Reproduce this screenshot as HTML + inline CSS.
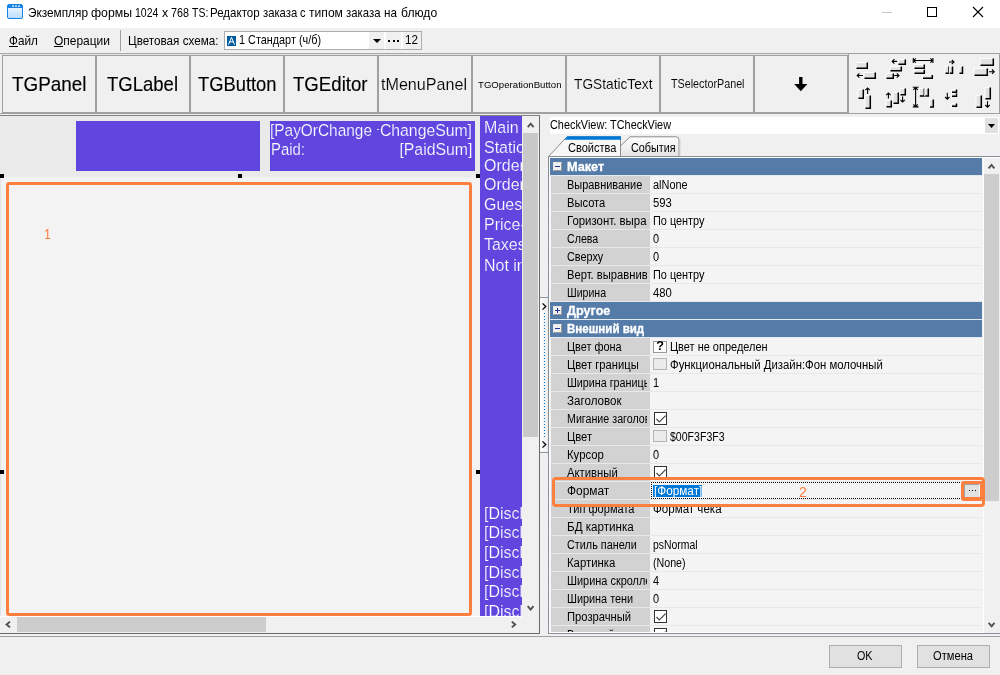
<!DOCTYPE html>
<html><head><meta charset="utf-8"><title>form</title>
<style>
html,body{margin:0;padding:0;}
body{width:1000px;height:675px;position:relative;overflow:hidden;background:#f0f0f0;font-family:"Liberation Sans",sans-serif;}
div{position:absolute;box-sizing:border-box;}
svg{position:absolute;overflow:visible;}
.t{white-space:pre;}
</style></head><body><div id="app" style="left:0;top:0;width:1000px;height:675px;overflow:hidden;will-change:transform;">
<div style="left:0px;top:0px;width:1000px;height:28px;background:#ffffff;"></div>
<svg style="left:7px;top:4px" width="16" height="15" viewBox="0 0 16 15">
<defs><linearGradient id="ig" x1="0" y1="0" x2="0" y2="1"><stop offset="0" stop-color="#f4faff"/><stop offset="1" stop-color="#b9dcfb"/></linearGradient></defs>
<rect x="0.5" y="0.5" width="15" height="14" rx="1.5" fill="url(#ig)" stroke="#1883e6" stroke-width="1"/>
<path d="M0.5 2 Q0.5 0.5 2 0.5 H14 Q15.5 0.5 15.5 2 V4 H0.5Z" fill="#1883e6"/>
<rect x="5" y="1.5" width="2" height="1.2" fill="#fff"/><rect x="8" y="1.5" width="2" height="1.2" fill="#fff"/><rect x="11" y="1.5" width="2" height="1.2" fill="#fff"/>
</svg>
<div id="t0" class="t" style="left:27.65px;top:0.60px;font-size:12.4px;line-height:25px;color:#000;transform:scaleX(0.9521);transform-origin:0 0;">Экземпляр</div>
<div id="t1" class="t" style="left:90.65px;top:0.60px;font-size:12.4px;line-height:25px;color:#000;transform:scaleX(0.9890);transform-origin:0 0;">формы</div>
<div id="t2" class="t" style="left:135.3px;top:0.60px;font-size:12.4px;line-height:25px;color:#000;transform:scaleX(0.8449);transform-origin:0 0;">1024</div>
<div id="t3" class="t" style="left:161.8px;top:0.60px;font-size:12.4px;line-height:25px;color:#000;transform:scaleX(0.9995);transform-origin:0 0;">x</div>
<div id="t4" class="t" style="left:170.6px;top:0.60px;font-size:12.4px;line-height:25px;color:#000;transform:scaleX(0.8701);transform-origin:0 0;">768</div>
<div id="t5" class="t" style="left:191.70000000000002px;top:0.60px;font-size:12.4px;line-height:25px;color:#000;transform:scaleX(0.8454);transform-origin:0 0;">TS:</div>
<div id="t6" class="t" style="left:210.15px;top:0.60px;font-size:12.4px;line-height:25px;color:#000;transform:scaleX(0.9317);transform-origin:0 0;">Редактор</div>
<div id="t7" class="t" style="left:262.65px;top:0.60px;font-size:12.4px;line-height:25px;color:#000;transform:scaleX(0.9097);transform-origin:0 0;">заказа</div>
<div id="t8" class="t" style="left:300.15px;top:0.60px;font-size:12.4px;line-height:25px;color:#000;transform:scaleX(0.8786);transform-origin:0 0;">с</div>
<div id="t9" class="t" style="left:308.65px;top:0.60px;font-size:12.4px;line-height:25px;color:#000;transform:scaleX(0.9779);transform-origin:0 0;">типом</div>
<div id="t10" class="t" style="left:345.65px;top:0.60px;font-size:12.4px;line-height:25px;color:#000;transform:scaleX(0.9164);transform-origin:0 0;">заказа</div>
<div id="t11" class="t" style="left:383.9px;top:0.60px;font-size:12.4px;line-height:25px;color:#000;transform:scaleX(0.9429);transform-origin:0 0;">на</div>
<div id="t12" class="t" style="left:400.65px;top:0.60px;font-size:12.4px;line-height:25px;color:#000;transform:scaleX(0.9804);transform-origin:0 0;">блюдо</div>
<div style="left:882px;top:12px;width:10px;height:1px;background:#c4c4c4;"></div>
<div style="left:927px;top:7px;width:10px;height:10px;border:1px solid #000;"></div>
<svg style="left:973px;top:7px" width="10" height="10" viewBox="0 0 10 10"><path d="M0 0 L10 10 M10 0 L0 10" stroke="#000" stroke-width="1.1" fill="none"/></svg>
<div id="t13" class="t" style="left:8.8px;top:28.97px;font-size:12.2px;line-height:24px;color:#000;transform:scaleX(0.9610);transform-origin:0 0;">Файл</div>
<div style="left:9px;top:46px;width:9px;height:1px;background:#000;"></div>
<div id="t14" class="t" style="left:53.6px;top:28.97px;font-size:12.2px;line-height:24px;color:#000;transform:scaleX(0.9822);transform-origin:0 0;">Операции</div>
<div style="left:54px;top:46px;width:9px;height:1px;background:#000;"></div>
<div style="left:120px;top:30px;width:1px;height:21px;background:#a0a0a0;"></div>
<div id="t15" class="t" style="left:128px;top:28.97px;font-size:12.2px;line-height:24px;color:#000;transform:scaleX(0.9583);transform-origin:0 0;">Цветовая схема:</div>
<div style="left:224px;top:31px;width:198px;height:19px;background:#fff;border:1px solid #adadad;"></div>
<svg style="left:227px;top:36px" width="9" height="10" viewBox="0 0 9 10"><rect width="9" height="10" fill="#005a9e"/>
<path d="M1.5 8.6 L4.5 1.4 L7.5 8.6 M2.4 5.9 H6.6" stroke="#fff" stroke-width="1" fill="none"/></svg>
<div id="t16" class="t" style="left:239.3px;top:28.07px;font-size:12.2px;line-height:24px;color:#000;transform:scaleX(0.8901);transform-origin:0 0;">1 Стандарт (ч/б)</div>
<div style="left:369px;top:32px;width:15px;height:17px;background:#f0f0f0;"></div>
<svg style="left:373px;top:39px" width="8" height="4" viewBox="0 0 8 4"><path d="M0 0 H8 L4 4Z" fill="#000"/></svg>
<div style="left:386px;top:32px;width:15px;height:17px;background:#f0f0f0;"></div>
<div style="left:388px;top:40px;width:2px;height:2px;background:#000;"></div>
<div style="left:392.5px;top:40px;width:2px;height:2px;background:#000;"></div>
<div style="left:397px;top:40px;width:2px;height:2px;background:#000;"></div>
<div style="left:403px;top:32px;width:18px;height:17px;background:#f0f0f0;"></div>
<div id="t17" class="t" style="left:405.2px;top:27.60px;font-size:12.4px;line-height:25px;color:#000;transform:scaleX(0.9422);transform-origin:0 0;">12</div>
<div style="left:0px;top:53px;width:1000px;height:1px;background:#a8a8a8;"></div>
<div style="left:0px;top:54px;width:1000px;height:1px;background:#e4e4e4;"></div>
<div style="left:2px;top:55px;width:94px;height:58px;background:#f0f0f0;border:1px solid #a0a0a0;"></div>
<div id="t18" class="t" style="left:12px;top:64.04px;font-size:19.8px;line-height:40px;color:#000;transform:scaleX(0.9542);transform-origin:0 0;-webkit-text-stroke:0.15px #000;">TGPanel</div>
<div style="left:96px;top:55px;width:94px;height:58px;background:#f0f0f0;border:1px solid #a0a0a0;"></div>
<div id="t19" class="t" style="left:107.4px;top:64.04px;font-size:19.8px;line-height:40px;color:#000;transform:scaleX(0.9357);transform-origin:0 0;-webkit-text-stroke:0.15px #000;">TGLabel</div>
<div style="left:190px;top:55px;width:94px;height:58px;background:#f0f0f0;border:1px solid #a0a0a0;"></div>
<div id="t20" class="t" style="left:197.5px;top:64.04px;font-size:19.8px;line-height:40px;color:#000;transform:scaleX(0.9271);transform-origin:0 0;-webkit-text-stroke:0.15px #000;">TGButton</div>
<div style="left:284px;top:55px;width:94px;height:58px;background:#f0f0f0;border:1px solid #a0a0a0;"></div>
<div id="t21" class="t" style="left:293.4px;top:64.04px;font-size:19.8px;line-height:40px;color:#000;transform:scaleX(0.9412);transform-origin:0 0;-webkit-text-stroke:0.15px #000;">TGEditor</div>
<div style="left:378px;top:55px;width:94px;height:58px;background:#f0f0f0;border:1px solid #a0a0a0;"></div>
<div id="t22" class="t" style="left:381.3px;top:68.12px;font-size:16.4px;line-height:33px;color:#000;transform:scaleX(0.9830);transform-origin:0 0;-webkit-text-stroke:0.12px #f0f0f0;">tMenuPanel</div>
<div style="left:472px;top:55px;width:94px;height:58px;background:#f0f0f0;border:1px solid #a0a0a0;"></div>
<div id="t23" class="t" style="left:477.6px;top:74.64px;font-size:9.4px;line-height:19px;color:#000;transform:scaleX(1.0271);transform-origin:0 0;-webkit-text-stroke:0px #f0f0f0;">TGOperationButton</div>
<div style="left:566px;top:55px;width:94px;height:58px;background:#f0f0f0;border:1px solid #a0a0a0;"></div>
<div id="t24" class="t" style="left:574.4px;top:69.88px;font-size:14.5px;line-height:29px;color:#000;transform:scaleX(0.9458);transform-origin:0 0;-webkit-text-stroke:0.1px #f0f0f0;">TGStaticText</div>
<div style="left:660px;top:55px;width:94px;height:58px;background:#f0f0f0;border:1px solid #a0a0a0;"></div>
<div id="t25" class="t" style="left:670.6px;top:70.93px;font-size:12.9px;line-height:26px;color:#000;transform:scaleX(0.8339);transform-origin:0 0;-webkit-text-stroke:0.05px #f0f0f0;">TSelectorPanel</div>
<div style="left:754px;top:55px;width:94px;height:58px;background:#f0f0f0;border:1px solid #a0a0a0;"></div>
<svg style="left:793.8px;top:77.4px" width="13.6" height="14.2" viewBox="0 0 13.6 14.2"><path d="M5.1 0 H8.5 V7 H13.4 L6.8 14.2 L0.2 7 H5.1Z" fill="#000"/></svg>
<div style="left:848px;top:53px;width:152px;height:61px;background:#f0f0f0;border:1px solid #a0a0a0;"></div>
<svg style="left:0;top:0" width="1000" height="675" viewBox="0 0 1000 675"><rect x="856" y="62" width="12" height="7" fill="#e2e2e2"/><path d="M856 68.5 V62.5 H867" stroke="#fff" stroke-width="1" fill="none"/><path d="M856.5 68.3 H867.3 V62.5" stroke="#000" stroke-width="1.5" fill="none"/><rect x="864" y="72" width="12" height="7" fill="#e2e2e2"/><path d="M864 78.5 V72.5 H875" stroke="#fff" stroke-width="1" fill="none"/><path d="M864.5 78.3 H875.3 V72.5" stroke="#000" stroke-width="1.5" fill="none"/><path d="M863 75.5 L857.2 75.5 M859.40 73.30 L857.2 75.5 L859.40 77.70" stroke="#000" stroke-width="1.1" fill="none"/><path d="M897.2 61.4 L892.2 61.4 M894.40 59.20 L892.2 61.4 L894.40 63.60" stroke="#000" stroke-width="1.1" fill="none"/><rect x="898" y="59" width="8" height="6" fill="#e2e2e2"/><path d="M898 64.5 V59.5 H905" stroke="#fff" stroke-width="1" fill="none"/><path d="M898.5 64.3 H905.3 V59.5" stroke="#000" stroke-width="1.5" fill="none"/><rect x="890" y="66" width="12" height="5.5" fill="#e2e2e2"/><path d="M890 71.0 V66.5 H901" stroke="#fff" stroke-width="1" fill="none"/><path d="M890.5 70.8 H901.3 V66.5" stroke="#000" stroke-width="1.5" fill="none"/><rect x="886" y="73" width="8" height="6" fill="#e2e2e2"/><path d="M886 78.5 V73.5 H893" stroke="#fff" stroke-width="1" fill="none"/><path d="M886.5 78.3 H893.3 V73.5" stroke="#000" stroke-width="1.5" fill="none"/><path d="M894.2 75.5 L899 75.5 M896.80 77.70 L899 75.5 L896.80 73.30" stroke="#000" stroke-width="1.1" fill="none"/><path d="M923 60.5 L913.6 60.5 M915.80 58.30 L913.6 60.5 L915.80 62.70" stroke="#000" stroke-width="1.1" fill="none"/><path d="M923 60.5 L932.6 60.5 M930.40 62.70 L932.6 60.5 L930.40 58.30" stroke="#000" stroke-width="1.1" fill="none"/><path d="M913.3 58 V63 M932.9 58 V63" stroke="#000" stroke-width="1.1"/><rect x="914" y="64" width="11" height="5" fill="#e2e2e2"/><path d="M914 68.5 V64.5 H924" stroke="#fff" stroke-width="1" fill="none"/><path d="M914.5 68.3 H924.3 V64.5" stroke="#000" stroke-width="1.5" fill="none"/><rect x="914" y="69.3" width="11" height="4.700000000000003" fill="#e2e2e2"/><path d="M914 73.5 V69.8 H924" stroke="#fff" stroke-width="1" fill="none"/><path d="M914.5 73.3 H924.3 V69.8" stroke="#000" stroke-width="1.5" fill="none"/><rect x="922.5" y="74.6" width="10.5" height="4.400000000000006" fill="#e2e2e2"/><path d="M922.5 78.5 V75.1 H932" stroke="#fff" stroke-width="1" fill="none"/><path d="M923.0 78.3 H932.3 V75.1" stroke="#000" stroke-width="1.5" fill="none"/><path d="M949 62 L954 62 M951.80 64.20 L954 62 L951.80 59.80" stroke="#000" stroke-width="1.1" fill="none"/><rect x="945" y="66" width="4.5" height="8" fill="#e2e2e2"/><path d="M945 73.5 V66.5 H948.5" stroke="#fff" stroke-width="1" fill="none"/><path d="M945.5 73.3 H948.8 V66.5" stroke="#000" stroke-width="1.5" fill="none"/><rect x="949.3" y="66" width="3.900000000000091" height="8" fill="#e2e2e2"/><path d="M949.3 73.5 V66.5 H952.2" stroke="#fff" stroke-width="1" fill="none"/><path d="M949.8 73.3 H952.5 V66.5" stroke="#000" stroke-width="1.5" fill="none"/><rect x="959" y="66" width="4.2000000000000455" height="8" fill="#e2e2e2"/><path d="M959 73.5 V66.5 H962.2" stroke="#fff" stroke-width="1" fill="none"/><path d="M959.5 73.3 H962.5 V66.5" stroke="#000" stroke-width="1.5" fill="none"/><rect x="980" y="58" width="14" height="8" fill="#e2e2e2"/><path d="M980 65.5 V58.5 H993" stroke="#fff" stroke-width="1" fill="none"/><path d="M980.5 65.3 H993.3 V58.5" stroke="#000" stroke-width="1.5" fill="none"/><rect x="974" y="68" width="14" height="8" fill="#e2e2e2"/><path d="M974 75.5 V68.5 H987" stroke="#fff" stroke-width="1" fill="none"/><path d="M974.5 75.3 H987.3 V68.5" stroke="#000" stroke-width="1.5" fill="none"/><path d="M989 71.7 L994.2 71.7 M992.00 73.90 L994.2 71.7 L992.00 69.50" stroke="#000" stroke-width="1.1" fill="none"/><rect x="858" y="89" width="6" height="10" fill="#e2e2e2"/><path d="M858 98.5 V89.5 H863" stroke="#fff" stroke-width="1" fill="none"/><path d="M858.5 98.3 H863.3 V89.5" stroke="#000" stroke-width="1.5" fill="none"/><path d="M867.6 94 L867.6 88 M869.80 90.20 L867.6 88 L865.40 90.20" stroke="#000" stroke-width="1.1" fill="none"/><rect x="865" y="95" width="6" height="14" fill="#e2e2e2"/><path d="M865 108.5 V95.5 H870" stroke="#fff" stroke-width="1" fill="none"/><path d="M865.5 108.3 H870.3 V95.5" stroke="#000" stroke-width="1.5" fill="none"/><path d="M888.4 98.6 L888.4 93 M890.60 95.20 L888.4 93 L886.20 95.20" stroke="#000" stroke-width="1.1" fill="none"/><rect x="886" y="100" width="6" height="7.5" fill="#e2e2e2"/><path d="M886 107.0 V100.5 H891" stroke="#fff" stroke-width="1" fill="none"/><path d="M886.5 106.8 H891.3 V100.5" stroke="#000" stroke-width="1.5" fill="none"/><rect x="893" y="92" width="6" height="12" fill="#e2e2e2"/><path d="M893 103.5 V92.5 H898" stroke="#fff" stroke-width="1" fill="none"/><path d="M893.5 103.3 H898.3 V92.5" stroke="#000" stroke-width="1.5" fill="none"/><rect x="900" y="88" width="6" height="7.5" fill="#e2e2e2"/><path d="M900 95.0 V88.5 H905" stroke="#fff" stroke-width="1" fill="none"/><path d="M900.5 94.8 H905.3 V88.5" stroke="#000" stroke-width="1.5" fill="none"/><path d="M902.6 96.4 L902.6 102 M900.40 99.80 L902.6 102 L904.80 99.80" stroke="#000" stroke-width="1.1" fill="none"/><path d="M915.6 97 L915.6 87.6 M917.80 89.80 L915.6 87.6 L913.40 89.80" stroke="#000" stroke-width="1.1" fill="none"/><path d="M915.6 97 L915.6 106.6 M913.40 104.40 L915.6 106.6 L917.80 104.40" stroke="#000" stroke-width="1.1" fill="none"/><path d="M912.8 87.3 H918.6 M912.8 106.9 H918.6" stroke="#000" stroke-width="1.1"/><rect x="919.3" y="88" width="5.7000000000000455" height="8.599999999999994" fill="#e2e2e2"/><path d="M919.3 96.1 V88.5 H924" stroke="#fff" stroke-width="1" fill="none"/><path d="M919.8 95.89999999999999 H924.3 V88.5" stroke="#000" stroke-width="1.5" fill="none"/><rect x="924.8" y="88" width="4.2000000000000455" height="8.599999999999994" fill="#e2e2e2"/><path d="M924.8 96.1 V88.5 H928" stroke="#fff" stroke-width="1" fill="none"/><path d="M925.3 95.89999999999999 H928.3 V88.5" stroke="#000" stroke-width="1.5" fill="none"/><rect x="929.5" y="99" width="4.5" height="8.599999999999994" fill="#e2e2e2"/><path d="M929.5 107.1 V99.5 H933" stroke="#fff" stroke-width="1" fill="none"/><path d="M930.0 106.89999999999999 H933.3 V99.5" stroke="#000" stroke-width="1.5" fill="none"/><path d="M947.3 92.8 L947.3 99.2 M945.10 97.00 L947.3 99.2 L949.50 97.00" stroke="#000" stroke-width="1.1" fill="none"/><rect x="951.5" y="89" width="5.7000000000000455" height="4" fill="#e2e2e2"/><path d="M951.5 92.5 V89.5 H956.2" stroke="#fff" stroke-width="1" fill="none"/><path d="M952.0 92.3 H956.5 V89.5" stroke="#000" stroke-width="1.5" fill="none"/><rect x="951.5" y="93" width="5.7000000000000455" height="4" fill="#e2e2e2"/><path d="M951.5 96.5 V93.5 H956.2" stroke="#fff" stroke-width="1" fill="none"/><path d="M952.0 96.3 H956.5 V93.5" stroke="#000" stroke-width="1.5" fill="none"/><rect x="951.5" y="103" width="5.7000000000000455" height="4" fill="#e2e2e2"/><path d="M951.5 106.5 V103.5 H956.2" stroke="#fff" stroke-width="1" fill="none"/><path d="M952.0 106.3 H956.5 V103.5" stroke="#000" stroke-width="1.5" fill="none"/><rect x="985" y="87" width="6" height="12.5" fill="#e2e2e2"/><path d="M985 99.0 V87.5 H990" stroke="#fff" stroke-width="1" fill="none"/><path d="M985.5 98.8 H990.3 V87.5" stroke="#000" stroke-width="1.5" fill="none"/><rect x="976" y="95" width="6" height="13" fill="#e2e2e2"/><path d="M976 107.5 V95.5 H981" stroke="#fff" stroke-width="1" fill="none"/><path d="M976.5 107.3 H981.3 V95.5" stroke="#000" stroke-width="1.5" fill="none"/><path d="M987.5 101.2 L987.5 107.2 M985.30 105.00 L987.5 107.2 L989.70 105.00" stroke="#000" stroke-width="1.1" fill="none"/></svg>
<div style="left:0px;top:113px;width:849px;height:1px;background:#a0a0a0;"></div>
<div style="left:0px;top:115px;width:540px;height:519px;background:#eaeaea;border-top:1px solid #828282;border-right:1px solid #696969;border-bottom:1px solid #696969;"></div>
<div style="left:1px;top:177px;width:479px;height:439px;background:#f3f3f3;"></div>
<div style="left:0px;top:177px;width:1px;height:439px;background:#e2e2e2;"></div>
<div style="left:76px;top:121px;width:184px;height:50px;background:#6046df;"></div>
<div style="left:270px;top:121px;width:205px;height:50px;background:#6046df;"></div>
<div id="t26" class="t" style="left:270.3px;top:114.28px;font-size:16.8px;line-height:34px;color:#fff;transform:scaleX(0.9188);transform-origin:0 0;-webkit-text-stroke:0.2px #6046df;">[PayOrChange</div>
<div id="t27" class="t" style="right:527.8px;top:114.28px;font-size:16.8px;line-height:34px;color:#fff;transform:scaleX(0.9392);transform-origin:100% 0;-webkit-text-stroke:0.2px #6046df;">ChangeSum]</div>
<div id="t28" class="t" style="left:270.8px;top:133.08px;font-size:16.8px;line-height:34px;color:#fff;transform:scaleX(0.8889);transform-origin:0 0;-webkit-text-stroke:0.2px #6046df;">Paid:</div>
<div id="t29" class="t" style="right:527.8px;top:133.08px;font-size:16.8px;line-height:34px;color:#fff;transform:scaleX(0.9429);transform-origin:100% 0;-webkit-text-stroke:0.2px #6046df;">[PaidSum]</div>
<div style="left:377.3px;top:128.6px;width:2.2px;height:1px;background:#e8e4ff;"></div>
<div style="left:480px;top:116px;width:42px;height:500px;background:#6046df;overflow:hidden;"><div id="t30" class="t" style="left:4.0px;top:-5.12px;font-size:16.8px;line-height:34px;color:#fff;transform:scaleX(0.9520);transform-origin:0 0;-webkit-text-stroke:0.2px #6046df;">Main</div><div id="t31" class="t" style="left:4.0px;top:14.68px;font-size:16.8px;line-height:34px;color:#fff;transform:scaleX(0.9520);transform-origin:0 0;-webkit-text-stroke:0.2px #6046df;">Static</div><div id="t32" class="t" style="left:4.0px;top:32.68px;font-size:16.8px;line-height:34px;color:#fff;transform:scaleX(0.9520);transform-origin:0 0;-webkit-text-stroke:0.2px #6046df;">Order</div><div id="t33" class="t" style="left:4.0px;top:52.48px;font-size:16.8px;line-height:34px;color:#fff;transform:scaleX(0.9520);transform-origin:0 0;-webkit-text-stroke:0.2px #6046df;">Order</div><div id="t34" class="t" style="left:4.0px;top:72.38px;font-size:16.8px;line-height:34px;color:#fff;transform:scaleX(0.9520);transform-origin:0 0;-webkit-text-stroke:0.2px #6046df;">Guest</div><div id="t35" class="t" style="left:4.0px;top:92.48px;font-size:16.8px;line-height:34px;color:#fff;transform:scaleX(0.9520);transform-origin:0 0;-webkit-text-stroke:0.2px #6046df;">Price-</div><div id="t36" class="t" style="left:4.0px;top:112.48px;font-size:16.8px;line-height:34px;color:#fff;transform:scaleX(0.9520);transform-origin:0 0;-webkit-text-stroke:0.2px #6046df;">Taxes</div><div id="t37" class="t" style="left:4.0px;top:132.58px;font-size:16.8px;line-height:34px;color:#fff;transform:scaleX(0.9520);transform-origin:0 0;-webkit-text-stroke:0.2px #6046df;">Not in</div><div id="t38" class="t" style="left:3.6000000000000227px;top:380.58px;font-size:16.8px;line-height:34px;color:#fff;transform:scaleX(0.9520);transform-origin:0 0;-webkit-text-stroke:0.2px #6046df;">[Discl</div><div id="t39" class="t" style="left:3.6000000000000227px;top:400.38px;font-size:16.8px;line-height:34px;color:#fff;transform:scaleX(0.9520);transform-origin:0 0;-webkit-text-stroke:0.2px #6046df;">[Discl</div><div id="t40" class="t" style="left:3.6000000000000227px;top:420.18px;font-size:16.8px;line-height:34px;color:#fff;transform:scaleX(0.9520);transform-origin:0 0;-webkit-text-stroke:0.2px #6046df;">[Discl</div><div id="t41" class="t" style="left:3.6000000000000227px;top:439.88px;font-size:16.8px;line-height:34px;color:#fff;transform:scaleX(0.9520);transform-origin:0 0;-webkit-text-stroke:0.2px #6046df;">[Discl</div><div id="t42" class="t" style="left:3.6000000000000227px;top:459.48px;font-size:16.8px;line-height:34px;color:#fff;transform:scaleX(0.9520);transform-origin:0 0;-webkit-text-stroke:0.2px #6046df;">[Discl</div><div id="t43" class="t" style="left:3.6000000000000227px;top:479.18px;font-size:16.8px;line-height:34px;color:#fff;transform:scaleX(0.9520);transform-origin:0 0;-webkit-text-stroke:0.2px #6046df;">[Discl</div></div>
<div style="left:6px;top:182px;width:466px;height:434px;background:#f3f3f3;border:3px solid #ff7f3f;border-radius:3px;"></div>
<svg style="left:0;top:0" width="60" height="250" viewBox="0 0 60 250"><path d="M45.2 231.4 L47.7 229.6 V238.4 M45.2 238.5 H50.3" stroke="#ff7f3f" stroke-width="1.15" fill="none"/></svg>
<div style="left:0px;top:174px;width:4px;height:4px;background:#000;"></div>
<div style="left:238px;top:174px;width:4px;height:4px;background:#000;"></div>
<div style="left:476px;top:174px;width:4px;height:4px;background:#000;"></div>
<div style="left:0px;top:470px;width:4px;height:4px;background:#000;"></div>
<div style="left:476px;top:470px;width:4px;height:4px;background:#000;"></div>
<div style="left:522px;top:116px;width:17px;height:500px;background:#f0f0f0;"></div>
<div style="left:523px;top:133px;width:15px;height:304px;background:#c8c8c8;"></div>
<div style="left:0px;top:616px;width:522px;height:17px;background:#f0f0f0;border-top:1px solid #fff;"></div>
<div style="left:522px;top:616px;width:17px;height:17px;background:#f0f0f0;"></div>
<div style="left:17px;top:617px;width:249px;height:15px;background:#cdcdcd;"></div>
<div style="left:540px;top:115px;width:460px;height:521px;background:#f0f0f0;"></div>
<div style="left:540px;top:297px;width:9px;height:156px;background:linear-gradient(90deg,#ffffff,#ececec);border:1px solid #8c949c;border-left:none;"></div>
<div style="left:544px;top:313px;width:1px;height:1px;background:#0078d7;"></div>
<div style="left:544px;top:316px;width:1px;height:1px;background:#0078d7;"></div>
<div style="left:544px;top:319px;width:1px;height:1px;background:#0078d7;"></div>
<div style="left:544px;top:322px;width:1px;height:1px;background:#0078d7;"></div>
<div style="left:544px;top:325px;width:1px;height:1px;background:#0078d7;"></div>
<div style="left:544px;top:328px;width:1px;height:1px;background:#0078d7;"></div>
<div style="left:544px;top:331px;width:1px;height:1px;background:#0078d7;"></div>
<div style="left:544px;top:334px;width:1px;height:1px;background:#0078d7;"></div>
<div style="left:544px;top:337px;width:1px;height:1px;background:#0078d7;"></div>
<div style="left:544px;top:340px;width:1px;height:1px;background:#0078d7;"></div>
<div style="left:544px;top:343px;width:1px;height:1px;background:#0078d7;"></div>
<div style="left:544px;top:346px;width:1px;height:1px;background:#0078d7;"></div>
<div style="left:544px;top:349px;width:1px;height:1px;background:#0078d7;"></div>
<div style="left:544px;top:352px;width:1px;height:1px;background:#0078d7;"></div>
<div style="left:544px;top:355px;width:1px;height:1px;background:#0078d7;"></div>
<div style="left:544px;top:358px;width:1px;height:1px;background:#0078d7;"></div>
<div style="left:544px;top:361px;width:1px;height:1px;background:#0078d7;"></div>
<div style="left:544px;top:364px;width:1px;height:1px;background:#0078d7;"></div>
<div style="left:544px;top:367px;width:1px;height:1px;background:#0078d7;"></div>
<div style="left:544px;top:370px;width:1px;height:1px;background:#0078d7;"></div>
<div style="left:544px;top:373px;width:1px;height:1px;background:#0078d7;"></div>
<div style="left:544px;top:376px;width:1px;height:1px;background:#0078d7;"></div>
<div style="left:544px;top:379px;width:1px;height:1px;background:#0078d7;"></div>
<div style="left:544px;top:382px;width:1px;height:1px;background:#0078d7;"></div>
<div style="left:544px;top:385px;width:1px;height:1px;background:#0078d7;"></div>
<div style="left:544px;top:388px;width:1px;height:1px;background:#0078d7;"></div>
<div style="left:544px;top:391px;width:1px;height:1px;background:#0078d7;"></div>
<div style="left:544px;top:394px;width:1px;height:1px;background:#0078d7;"></div>
<div style="left:544px;top:397px;width:1px;height:1px;background:#0078d7;"></div>
<div style="left:544px;top:400px;width:1px;height:1px;background:#0078d7;"></div>
<div style="left:544px;top:403px;width:1px;height:1px;background:#0078d7;"></div>
<div style="left:544px;top:406px;width:1px;height:1px;background:#0078d7;"></div>
<div style="left:544px;top:409px;width:1px;height:1px;background:#0078d7;"></div>
<div style="left:544px;top:412px;width:1px;height:1px;background:#0078d7;"></div>
<div style="left:544px;top:415px;width:1px;height:1px;background:#0078d7;"></div>
<div style="left:544px;top:418px;width:1px;height:1px;background:#0078d7;"></div>
<div style="left:544px;top:421px;width:1px;height:1px;background:#0078d7;"></div>
<div style="left:544px;top:424px;width:1px;height:1px;background:#0078d7;"></div>
<div style="left:544px;top:427px;width:1px;height:1px;background:#0078d7;"></div>
<div style="left:544px;top:430px;width:1px;height:1px;background:#0078d7;"></div>
<div style="left:544px;top:433px;width:1px;height:1px;background:#0078d7;"></div>
<div style="left:544px;top:436px;width:1px;height:1px;background:#0078d7;"></div>
<svg style="left:542px;top:303px" width="4.5" height="7" viewBox="0 0 4.5 7"><path d="M0.5 0.4 L3.8 3.5 L0.5 6.6" stroke="#000" stroke-width="1.25" fill="none"/></svg>
<svg style="left:542px;top:441px" width="4.5" height="7" viewBox="0 0 4.5 7"><path d="M0.5 0.4 L3.8 3.5 L0.5 6.6" stroke="#000" stroke-width="1.25" fill="none"/></svg>
<div style="left:550px;top:117px;width:449px;height:17px;background:#fff;"></div>
<div id="t44" class="t" style="left:550.4px;top:112.84px;font-size:12px;line-height:24px;color:#000;transform:scaleX(0.9070);transform-origin:0 0;">CheckView: TCheckView</div>
<div style="left:985px;top:118px;width:13px;height:15px;background:#e1e1e1;"></div>
<svg style="left:988px;top:124px" width="7" height="4" viewBox="0 0 7 4"><path d="M0 0 H7 L3.5 4Z" fill="#000"/></svg>
<svg style="left:548px;top:135px" width="140" height="23" viewBox="0 0 140 23">
<defs><linearGradient id="tg" x1="0" y1="0" x2="0" y2="1"><stop offset="0" stop-color="#fdfdfd"/><stop offset="0.5" stop-color="#f2f2f2"/><stop offset="1" stop-color="#e2e2e2"/></linearGradient></defs>
<path d="M72.5 21.5 V11 L82 1.8 H128 Q131 1.8 131 5 V21.5Z" fill="url(#tg)"/>
<path d="M72.5 11 L82 1.8 H128 Q131 1.8 131 5 V21.5" fill="none" stroke="#8c8c8c" stroke-width="1"/>
<path d="M132 4 V21.5" fill="none" stroke="#d4d4d4" stroke-width="1"/>
<path d="M0.5 21.5 L19 1.8 H72.5 V21.5Z" fill="#f7f7f7"/>
<path d="M0.5 21.5 L19 1.8 H72.5 V21.5" fill="none" stroke="#8c8c8c" stroke-width="1"/>
<path d="M19.5 1.3 H73 V4.7 H16.3Z" fill="#0078d7"/>
</svg>
<div id="t45" class="t" style="left:568px;top:135.84px;font-size:12px;line-height:24px;color:#000;transform:scaleX(0.9202);transform-origin:0 0;">Свойства</div>
<div id="t46" class="t" style="left:631px;top:135.84px;font-size:12px;line-height:24px;color:#000;transform:scaleX(0.8981);transform-origin:0 0;">События</div>
<div style="left:548px;top:156px;width:452px;height:478px;background:#f4f4f4;border-top:1px solid #868e98;border-left:1px solid #868e98;border-bottom:1px solid #868e98;"></div>
<div style="left:549px;top:157px;width:451px;height:476px;border-top:1px solid #fff;border-left:1px solid #fff;border-bottom:1px solid #fff;"></div>
<div style="left:550px;top:158px;width:432px;height:17px;background:#557ca9;"></div>
<div style="left:550px;top:175px;width:432px;height:1px;background:#e4eaf1;"></div>
<div style="left:553px;top:162px;width:9px;height:9px;background:#f0f0f0;border:1px solid #9a9a9a;border-top-color:#e8e8e8;border-left-color:#e8e8e8;"></div>
<div style="left:555px;top:166px;width:5px;height:1px;background:#26339a;"></div>
<div id="t47" class="t" style="left:567.0px;top:155.14px;font-size:12px;line-height:24px;color:#fff;font-weight:bold;transform:scaleX(1.0563);transform-origin:0 0;-webkit-text-stroke:0.3px #fff;">Макет</div>
<div style="left:551px;top:176px;width:99px;height:17px;background:#d2d2d2;"><div style="left:0;top:0;width:96px;height:17px;overflow:hidden;"><div id="t48" class="t" style="left:15.7px;top:-3.46px;font-size:12px;line-height:24px;color:#000;transform:scaleX(0.9115);transform-origin:0 0;">Выравнивание</div></div></div>
<div style="left:550px;top:193px;width:432px;height:1px;background:#e8e8e8;"></div>
<div id="t49" class="t" style="left:653.4px;top:172.54px;font-size:12px;line-height:24px;color:#000;transform:scaleX(0.9098);transform-origin:0 0;">alNone</div>
<div style="left:551px;top:194px;width:99px;height:17px;background:#d2d2d2;"><div style="left:0;top:0;width:96px;height:17px;overflow:hidden;"><div id="t50" class="t" style="left:15.7px;top:-3.46px;font-size:12px;line-height:24px;color:#000;transform:scaleX(0.9292);transform-origin:0 0;">Высота</div></div></div>
<div style="left:550px;top:211px;width:432px;height:1px;background:#e8e8e8;"></div>
<div id="t51" class="t" style="left:653.4px;top:190.54px;font-size:12px;line-height:24px;color:#000;transform:scaleX(0.9385);transform-origin:0 0;">593</div>
<div style="left:551px;top:212px;width:99px;height:17px;background:#d2d2d2;"><div style="left:0;top:0;width:96px;height:17px;overflow:hidden;"><div id="t52" class="t" style="left:15.7px;top:-3.46px;font-size:12px;line-height:24px;color:#000;transform:scaleX(0.9509);transform-origin:0 0;">Горизонт. выра</div></div></div>
<div style="left:550px;top:229px;width:432px;height:1px;background:#e8e8e8;"></div>
<div id="t53" class="t" style="left:653.4px;top:208.54px;font-size:12px;line-height:24px;color:#000;transform:scaleX(0.9080);transform-origin:0 0;">По центру</div>
<div style="left:551px;top:230px;width:99px;height:17px;background:#d2d2d2;"><div style="left:0;top:0;width:96px;height:17px;overflow:hidden;"><div id="t54" class="t" style="left:15.7px;top:-3.46px;font-size:12px;line-height:24px;color:#000;transform:scaleX(0.8875);transform-origin:0 0;">Слева</div></div></div>
<div style="left:550px;top:247px;width:432px;height:1px;background:#e8e8e8;"></div>
<div id="t55" class="t" style="left:653.4px;top:226.54px;font-size:12px;line-height:24px;color:#000;transform:scaleX(0.9100);transform-origin:0 0;">0</div>
<div style="left:551px;top:248px;width:99px;height:17px;background:#d2d2d2;"><div style="left:0;top:0;width:96px;height:17px;overflow:hidden;"><div id="t56" class="t" style="left:15.7px;top:-3.46px;font-size:12px;line-height:24px;color:#000;transform:scaleX(0.9047);transform-origin:0 0;">Сверху</div></div></div>
<div style="left:550px;top:265px;width:432px;height:1px;background:#e8e8e8;"></div>
<div id="t57" class="t" style="left:653.4px;top:244.54px;font-size:12px;line-height:24px;color:#000;transform:scaleX(0.9100);transform-origin:0 0;">0</div>
<div style="left:551px;top:266px;width:99px;height:17px;background:#d2d2d2;"><div style="left:0;top:0;width:96px;height:17px;overflow:hidden;"><div id="t58" class="t" style="left:15.7px;top:-3.46px;font-size:12px;line-height:24px;color:#000;transform:scaleX(0.9333);transform-origin:0 0;">Верт. выравнив</div></div></div>
<div style="left:550px;top:283px;width:432px;height:1px;background:#e8e8e8;"></div>
<div id="t59" class="t" style="left:653.4px;top:262.54px;font-size:12px;line-height:24px;color:#000;transform:scaleX(0.9080);transform-origin:0 0;">По центру</div>
<div style="left:551px;top:284px;width:99px;height:17px;background:#d2d2d2;"><div style="left:0;top:0;width:96px;height:17px;overflow:hidden;"><div id="t60" class="t" style="left:15.7px;top:-3.46px;font-size:12px;line-height:24px;color:#000;transform:scaleX(0.8808);transform-origin:0 0;">Ширина</div></div></div>
<div style="left:550px;top:301px;width:432px;height:1px;background:#e8e8e8;"></div>
<div id="t61" class="t" style="left:653.4px;top:280.54px;font-size:12px;line-height:24px;color:#000;transform:scaleX(0.9385);transform-origin:0 0;">480</div>
<div style="left:550px;top:302px;width:432px;height:17px;background:#557ca9;"></div>
<div style="left:550px;top:319px;width:432px;height:1px;background:#e4eaf1;"></div>
<div style="left:553px;top:306px;width:9px;height:9px;background:#f0f0f0;border:1px solid #9a9a9a;border-top-color:#e8e8e8;border-left-color:#e8e8e8;"></div>
<div style="left:555px;top:310px;width:5px;height:1px;background:#26339a;"></div>
<div style="left:557px;top:308px;width:1px;height:5px;background:#26339a;"></div>
<div id="t62" class="t" style="left:567.0px;top:299.14px;font-size:12px;line-height:24px;color:#fff;font-weight:bold;transform:scaleX(1.0521);transform-origin:0 0;-webkit-text-stroke:0.3px #fff;">Другое</div>
<div style="left:550px;top:320px;width:432px;height:17px;background:#557ca9;"></div>
<div style="left:550px;top:337px;width:432px;height:1px;background:#e4eaf1;"></div>
<div style="left:553px;top:324px;width:9px;height:9px;background:#f0f0f0;border:1px solid #9a9a9a;border-top-color:#e8e8e8;border-left-color:#e8e8e8;"></div>
<div style="left:555px;top:328px;width:5px;height:1px;background:#26339a;"></div>
<div id="t63" class="t" style="left:567.0px;top:317.14px;font-size:12px;line-height:24px;color:#fff;font-weight:bold;transform:scaleX(0.9614);transform-origin:0 0;-webkit-text-stroke:0.3px #fff;">Внешний вид</div>
<div style="left:551px;top:338px;width:99px;height:17px;background:#d2d2d2;"><div style="left:0;top:0;width:96px;height:17px;overflow:hidden;"><div id="t64" class="t" style="left:15.7px;top:-3.46px;font-size:12px;line-height:24px;color:#000;transform:scaleX(0.9088);transform-origin:0 0;">Цвет фона</div></div></div>
<div style="left:550px;top:355px;width:432px;height:1px;background:#e8e8e8;"></div>
<div style="left:653px;top:340.6px;width:13.8px;height:12.2px;background:#fff;border:1px solid #9a9a9a;"></div>
<div id="t65" class="t" style="left:656.2px;top:334.33px;font-size:12.6px;line-height:25px;color:#000;font-weight:bold;">?</div>
<div id="t66" class="t" style="left:669.7px;top:334.54px;font-size:12px;line-height:24px;color:#000;transform:scaleX(0.9147);transform-origin:0 0;">Цвет не определен</div>
<div style="left:551px;top:356px;width:99px;height:17px;background:#d2d2d2;"><div style="left:0;top:0;width:96px;height:17px;overflow:hidden;"><div id="t67" class="t" style="left:15.7px;top:-3.46px;font-size:12px;line-height:24px;color:#000;transform:scaleX(0.9338);transform-origin:0 0;">Цвет границы</div></div></div>
<div style="left:550px;top:373px;width:432px;height:1px;background:#e8e8e8;"></div>
<div style="left:653px;top:358.1px;width:13.8px;height:12.4px;background:#ebebeb;border:1px solid #b4b4b4;"></div>
<div id="t68" class="t" style="left:670.2px;top:352.54px;font-size:12px;line-height:24px;color:#000;transform:scaleX(0.9460);transform-origin:0 0;">Функциональный Дизайн:Фон молочный</div>
<div style="left:551px;top:374px;width:99px;height:17px;background:#d2d2d2;"><div style="left:0;top:0;width:96px;height:17px;overflow:hidden;"><div id="t69" class="t" style="left:15.7px;top:-3.46px;font-size:12px;line-height:24px;color:#000;transform:scaleX(0.8950);transform-origin:0 0;">Ширина границы</div></div></div>
<div style="left:550px;top:391px;width:432px;height:1px;background:#e8e8e8;"></div>
<div id="t70" class="t" style="left:653.4px;top:370.54px;font-size:12px;line-height:24px;color:#000;transform:scaleX(0.9100);transform-origin:0 0;">1</div>
<div style="left:551px;top:392px;width:99px;height:17px;background:#d2d2d2;"><div style="left:0;top:0;width:96px;height:17px;overflow:hidden;"><div id="t71" class="t" style="left:15.7px;top:-3.46px;font-size:12px;line-height:24px;color:#000;transform:scaleX(0.9677);transform-origin:0 0;">Заголовок</div></div></div>
<div style="left:550px;top:409px;width:432px;height:1px;background:#e8e8e8;"></div>
<div style="left:551px;top:410px;width:99px;height:17px;background:#d2d2d2;"><div style="left:0;top:0;width:96px;height:17px;overflow:hidden;"><div id="t72" class="t" style="left:15.7px;top:-3.46px;font-size:12px;line-height:24px;color:#000;transform:scaleX(0.8900);transform-origin:0 0;">Мигание заголов</div></div></div>
<div style="left:550px;top:427px;width:432px;height:1px;background:#e8e8e8;"></div>
<div style="left:654.2px;top:412.3px;width:13px;height:12.4px;background:#fff;border:1px solid #333;"></div>
<svg style="left:655.8000000000001px;top:414.5px" width="10" height="8" viewBox="0 0 10 8"><path d="M0.5 4 L3.3 6.9 L9.6 0.6" stroke="#444" stroke-width="1.15" fill="none"/></svg>
<div style="left:551px;top:428px;width:99px;height:17px;background:#d2d2d2;"><div style="left:0;top:0;width:96px;height:17px;overflow:hidden;"><div id="t73" class="t" style="left:15.7px;top:-3.46px;font-size:12px;line-height:24px;color:#000;transform:scaleX(0.9334);transform-origin:0 0;">Цвет</div></div></div>
<div style="left:550px;top:445px;width:432px;height:1px;background:#e8e8e8;"></div>
<div style="left:653px;top:430.1px;width:13.8px;height:12.4px;background:#ebebeb;border:1px solid #b4b4b4;"></div>
<div id="t74" class="t" style="left:670.2px;top:424.54px;font-size:12px;line-height:24px;color:#000;transform:scaleX(0.8800);transform-origin:0 0;">$00F3F3F3</div>
<div style="left:551px;top:446px;width:99px;height:17px;background:#d2d2d2;"><div style="left:0;top:0;width:96px;height:17px;overflow:hidden;"><div id="t75" class="t" style="left:15.7px;top:-3.46px;font-size:12px;line-height:24px;color:#000;transform:scaleX(0.9432);transform-origin:0 0;">Курсор</div></div></div>
<div style="left:550px;top:463px;width:432px;height:1px;background:#e8e8e8;"></div>
<div id="t76" class="t" style="left:653.4px;top:442.54px;font-size:12px;line-height:24px;color:#000;transform:scaleX(0.9100);transform-origin:0 0;">0</div>
<div style="left:551px;top:464px;width:99px;height:17px;background:#d2d2d2;"><div style="left:0;top:0;width:96px;height:17px;overflow:hidden;"><div id="t77" class="t" style="left:15.7px;top:-3.46px;font-size:12px;line-height:24px;color:#000;transform:scaleX(0.9421);transform-origin:0 0;">Активный</div></div></div>
<div style="left:550px;top:481px;width:432px;height:1px;background:#e8e8e8;"></div>
<div style="left:654.2px;top:466.3px;width:13px;height:12.4px;background:#fff;border:1px solid #333;"></div>
<svg style="left:655.8000000000001px;top:468.5px" width="10" height="8" viewBox="0 0 10 8"><path d="M0.5 4 L3.3 6.9 L9.6 0.6" stroke="#444" stroke-width="1.15" fill="none"/></svg>
<div style="left:551px;top:482px;width:99px;height:17px;background:#d2d2d2;"><div style="left:0;top:0;width:96px;height:17px;overflow:hidden;"><div id="t78" class="t" style="left:15.7px;top:-3.46px;font-size:12px;line-height:24px;color:#000;transform:scaleX(0.9920);transform-origin:0 0;">Формат</div></div></div>
<div style="left:550px;top:499px;width:432px;height:1px;background:#e8e8e8;"></div>
<div style="left:653px;top:484.5px;width:49px;height:12.5px;background:#0078d7;"></div>
<div id="t79" class="t" style="left:653.6px;top:478.54px;font-size:12px;line-height:24px;color:#fff;transform:scaleX(0.9798);transform-origin:0 0;">[Формат]</div>
<div style="left:551px;top:500px;width:99px;height:17px;background:#d2d2d2;"><div style="left:0;top:0;width:96px;height:17px;overflow:hidden;"><div id="t80" class="t" style="left:15.7px;top:-3.46px;font-size:12px;line-height:24px;color:#000;transform:scaleX(0.9213);transform-origin:0 0;">Тип формата</div></div></div>
<div style="left:550px;top:517px;width:432px;height:1px;background:#e8e8e8;"></div>
<div id="t81" class="t" style="left:653.4px;top:496.54px;font-size:12px;line-height:24px;color:#000;transform:scaleX(0.9651);transform-origin:0 0;">Формат чека</div>
<div style="left:551px;top:518px;width:99px;height:17px;background:#d2d2d2;"><div style="left:0;top:0;width:96px;height:17px;overflow:hidden;"><div id="t82" class="t" style="left:15.7px;top:-3.46px;font-size:12px;line-height:24px;color:#000;transform:scaleX(0.9688);transform-origin:0 0;">БД картинка</div></div></div>
<div style="left:550px;top:535px;width:432px;height:1px;background:#e8e8e8;"></div>
<div style="left:551px;top:536px;width:99px;height:17px;background:#d2d2d2;"><div style="left:0;top:0;width:96px;height:17px;overflow:hidden;"><div id="t83" class="t" style="left:15.7px;top:-3.46px;font-size:12px;line-height:24px;color:#000;transform:scaleX(0.9024);transform-origin:0 0;">Стиль панели</div></div></div>
<div style="left:550px;top:553px;width:432px;height:1px;background:#e8e8e8;"></div>
<div id="t84" class="t" style="left:653.4px;top:532.54px;font-size:12px;line-height:24px;color:#000;transform:scaleX(0.8684);transform-origin:0 0;">psNormal</div>
<div style="left:551px;top:554px;width:99px;height:17px;background:#d2d2d2;"><div style="left:0;top:0;width:96px;height:17px;overflow:hidden;"><div id="t85" class="t" style="left:15.7px;top:-3.46px;font-size:12px;line-height:24px;color:#000;transform:scaleX(0.9473);transform-origin:0 0;">Картинка</div></div></div>
<div style="left:550px;top:571px;width:432px;height:1px;background:#e8e8e8;"></div>
<div id="t86" class="t" style="left:653.4px;top:550.54px;font-size:12px;line-height:24px;color:#000;transform:scaleX(0.8886);transform-origin:0 0;">(None)</div>
<div style="left:551px;top:572px;width:99px;height:17px;background:#d2d2d2;"><div style="left:0;top:0;width:96px;height:17px;overflow:hidden;"><div id="t87" class="t" style="left:15.7px;top:-3.46px;font-size:12px;line-height:24px;color:#000;transform:scaleX(0.9100);transform-origin:0 0;">Ширина скролле</div></div></div>
<div style="left:550px;top:589px;width:432px;height:1px;background:#e8e8e8;"></div>
<div id="t88" class="t" style="left:653.4px;top:568.54px;font-size:12px;line-height:24px;color:#000;transform:scaleX(0.9100);transform-origin:0 0;">4</div>
<div style="left:551px;top:590px;width:99px;height:17px;background:#d2d2d2;"><div style="left:0;top:0;width:96px;height:17px;overflow:hidden;"><div id="t89" class="t" style="left:15.7px;top:-3.46px;font-size:12px;line-height:24px;color:#000;transform:scaleX(0.9045);transform-origin:0 0;">Ширина тени</div></div></div>
<div style="left:550px;top:607px;width:432px;height:1px;background:#e8e8e8;"></div>
<div id="t90" class="t" style="left:653.4px;top:586.54px;font-size:12px;line-height:24px;color:#000;transform:scaleX(0.9100);transform-origin:0 0;">0</div>
<div style="left:551px;top:608px;width:99px;height:17px;background:#d2d2d2;"><div style="left:0;top:0;width:96px;height:17px;overflow:hidden;"><div id="t91" class="t" style="left:15.7px;top:-3.46px;font-size:12px;line-height:24px;color:#000;transform:scaleX(0.9338);transform-origin:0 0;">Прозрачный</div></div></div>
<div style="left:550px;top:625px;width:432px;height:1px;background:#e8e8e8;"></div>
<div style="left:654.2px;top:610.3px;width:13px;height:12.4px;background:#fff;border:1px solid #333;"></div>
<svg style="left:655.8000000000001px;top:612.5px" width="10" height="8" viewBox="0 0 10 8"><path d="M0.5 4 L3.3 6.9 L9.6 0.6" stroke="#444" stroke-width="1.15" fill="none"/></svg>
<div style="left:551px;top:626px;width:99px;height:17px;background:#d2d2d2;"><div style="left:0;top:0;width:96px;height:17px;overflow:hidden;"><div id="t92" class="t" style="left:15.7px;top:-3.46px;font-size:12px;line-height:24px;color:#000;transform:scaleX(0.9100);transform-origin:0 0;">Видимый</div></div></div>
<div style="left:550px;top:643px;width:432px;height:1px;background:#e8e8e8;"></div>
<div style="left:654.2px;top:628.3px;width:13px;height:12.4px;background:#fff;border:1px solid #333;"></div>
<svg style="left:655.8000000000001px;top:630.5px" width="10" height="8" viewBox="0 0 10 8"><path d="M0.5 4 L3.3 6.9 L9.6 0.6" stroke="#444" stroke-width="1.15" fill="none"/></svg>
<div style="left:549px;top:632px;width:451px;height:1px;background:#fff;"></div>
<div style="left:548px;top:633px;width:452px;height:1px;background:#868e98;"></div>
<div style="left:983px;top:158px;width:17px;height:475px;background:#f0f0f0;"></div>
<div style="left:983px;top:158px;width:1px;height:475px;background:#fff;"></div>
<div style="left:984px;top:174.3px;width:15px;height:327.2px;background:#cdcdcd;"></div>
<div style="left:651px;top:482px;width:310px;height:1px;background:repeating-linear-gradient(90deg,#000 0 1px,transparent 1px 2px);"></div>
<div style="left:651px;top:498px;width:310px;height:1px;background:repeating-linear-gradient(90deg,#000 0 1px,transparent 1px 2px);"></div>
<div style="left:651px;top:482px;width:1px;height:17px;background:repeating-linear-gradient(180deg,#000 0 1px,transparent 1px 2px);"></div>
<div style="left:964px;top:484px;width:15px;height:13px;background:#e1e1e1;border-top:1px solid #a0a0a0;border-left:1px solid #a0a0a0;"></div>
<div style="left:969px;top:490px;width:1.4px;height:1.4px;background:#000;"></div>
<div style="left:972px;top:490px;width:1.4px;height:1.4px;background:#000;"></div>
<div style="left:975px;top:490px;width:1.4px;height:1.4px;background:#000;"></div>
<div style="left:552px;top:477px;width:433px;height:30px;border:3px solid #ff7f3f;border-radius:4px;"></div>
<div style="left:961px;top:481px;width:22px;height:20px;border:3px solid #ff7f3f;border-bottom-width:4px;border-radius:3px;"></div>
<div id="t93" class="t" style="left:799.1px;top:477.95px;font-size:14px;line-height:28px;color:#ff7f3f;">2</div>
<svg style="left:0;top:0" width="1000" height="675" viewBox="0 0 1000 675"><path d="M527.80 127.10 L530.70 123.70 L533.60 127.10" stroke="#4f4f4f" stroke-width="1.9" fill="none"/></svg>
<svg style="left:0;top:0" width="1000" height="675" viewBox="0 0 1000 675"><path d="M527.70 606.20 L530.60 609.60 L533.50 606.20" stroke="#4f4f4f" stroke-width="1.9" fill="none"/></svg>
<svg style="left:0;top:0" width="1000" height="675" viewBox="0 0 1000 675"><path d="M10.00 621.60 L6.60 624.50 L10.00 627.40" stroke="#4f4f4f" stroke-width="1.9" fill="none"/></svg>
<svg style="left:0;top:0" width="1000" height="675" viewBox="0 0 1000 675"><path d="M511.80 621.60 L515.20 624.50 L511.80 627.40" stroke="#4f4f4f" stroke-width="1.9" fill="none"/></svg>
<svg style="left:0;top:0" width="1000" height="675" viewBox="0 0 1000 675"><path d="M988.60 168.30 L991.50 164.90 L994.40 168.30" stroke="#4f4f4f" stroke-width="1.9" fill="none"/></svg>
<svg style="left:0;top:0" width="1000" height="675" viewBox="0 0 1000 675"><path d="M988.70 622.90 L991.60 626.30 L994.50 622.90" stroke="#4f4f4f" stroke-width="1.9" fill="none"/></svg>
<div style="left:0px;top:634px;width:1000px;height:41px;background:#f0f0f0;"></div>
<div style="left:0px;top:636px;width:1000px;height:1px;background:#a0a0a0;"></div>
<div style="left:829px;top:645px;width:73px;height:23px;background:#e1e1e1;border:1px solid #adadad;"></div>
<div style="left:917px;top:645px;width:73px;height:23px;background:#e1e1e1;border:1px solid #adadad;"></div>
<div id="t94" class="t" style="left:857px;top:644.14px;font-size:12px;line-height:24px;color:#000;transform:scaleX(0.8937);transform-origin:0 0;">OK</div>
<div id="t95" class="t" style="left:933px;top:644.14px;font-size:12px;line-height:24px;color:#000;transform:scaleX(0.9289);transform-origin:0 0;">Отмена</div>
</div></body></html>
